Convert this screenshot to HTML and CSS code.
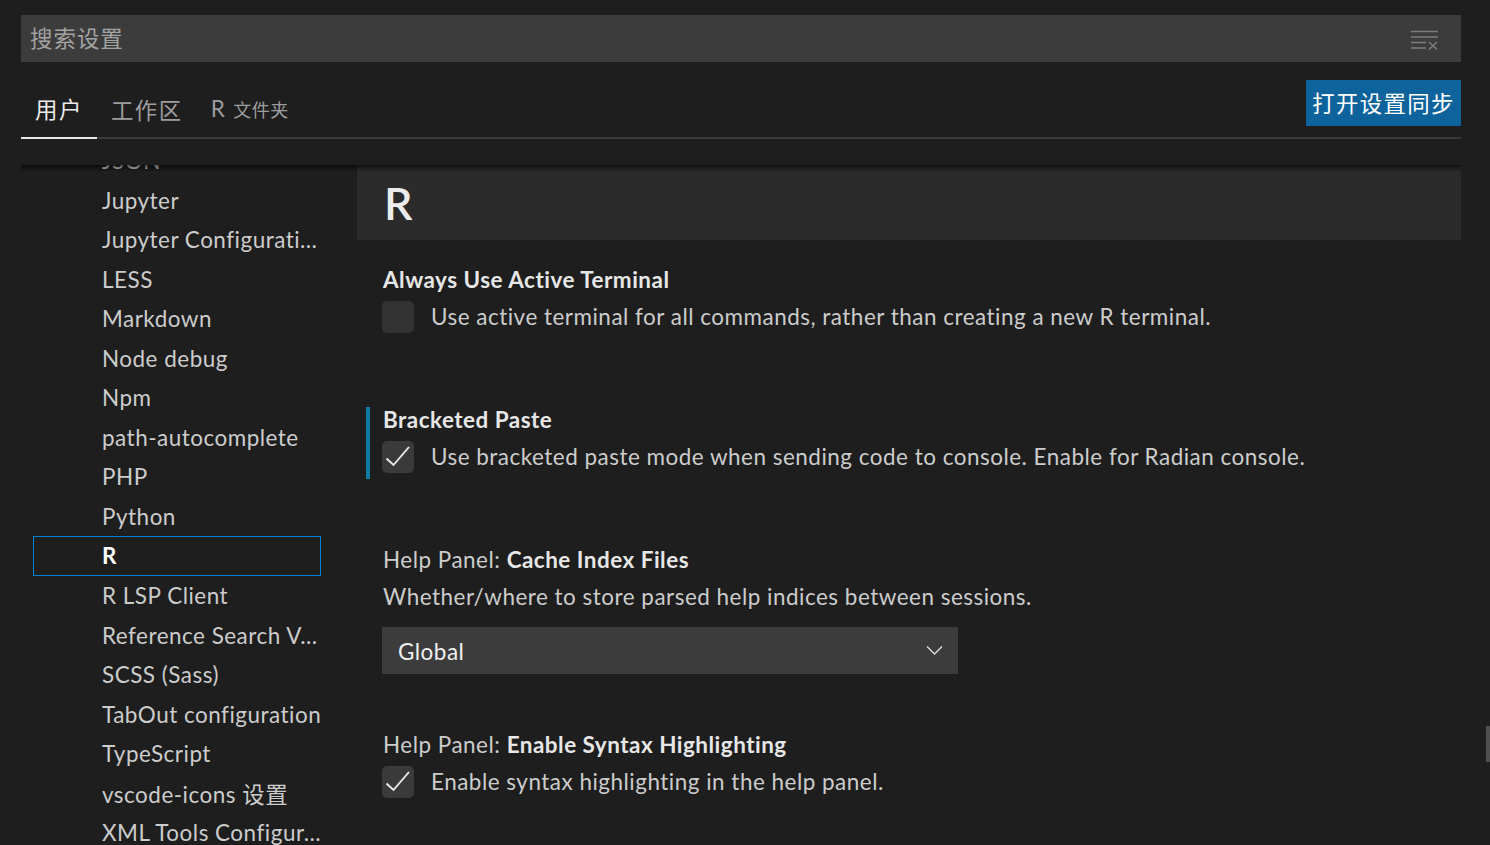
FILE: index.html
```html
<!DOCTYPE html>
<html lang="zh-CN">
<head>
<meta charset="utf-8">
<title>设置</title>
<link rel="stylesheet" href="styles.css">
</head>
<body>
<div class="editor">
  <div class="search">
    <span class="placeholder">搜索设置</span>
    <svg class="clear-icon" width="28" height="20" viewBox="0 0 28 20" aria-hidden="true">
      <g stroke="#7d7d7d" stroke-width="1.5" fill="none">
        <path d="M0 1.5H27"/>
        <path d="M0 7H27"/>
        <path d="M0 12.5H15"/>
        <path d="M0 18H15"/>
        <path d="M18 12L26 19.5M26 12L18 19.5"/>
      </g>
    </svg>
  </div>

  <div class="tabs-row">
    <div class="tabs">
      <div class="tab active">用户</div>
      <div class="tab">工作区</div>
      <div class="tab">R<span class="tab-desc">文件夹</span></div>
    </div>
    <button class="sync-btn">打开设置同步</button>
  </div>

  <div class="body">
    <nav class="toc">
      <div class="toc-list">
        <div class="toc-item">JSON</div>
        <div class="toc-item">Jupyter</div>
        <div class="toc-item">Jupyter Configurati…</div>
        <div class="toc-item">LESS</div>
        <div class="toc-item">Markdown</div>
        <div class="toc-item">Node debug</div>
        <div class="toc-item">Npm</div>
        <div class="toc-item">path-autocomplete</div>
        <div class="toc-item">PHP</div>
        <div class="toc-item">Python</div>
        <div class="toc-item selected">R</div>
        <div class="toc-item">R LSP Client</div>
        <div class="toc-item">Reference Search V…</div>
        <div class="toc-item">SCSS (Sass)</div>
        <div class="toc-item">TabOut configuration</div>
        <div class="toc-item">TypeScript</div>
        <div class="toc-item">vscode-icons 设置</div>
        <div class="toc-item">XML Tools Configur…</div>
      </div>
    </nav>

    <main class="settings">
      <div class="group-title">R</div>

      <div class="setting bool first">
        <div class="setting-title">Always Use Active Terminal</div>
        <div class="bool-row">
          <div class="checkbox"></div>
          <div class="desc">Use active terminal for all commands, rather than creating a new R terminal.</div>
        </div>
      </div>

      <div class="setting bool modified">
        <div class="setting-title">Bracketed Paste</div>
        <div class="bool-row">
          <div class="checkbox checked">
            <svg width="32" height="32" viewBox="0 0 32 32" aria-hidden="true"><path d="M4.5 17.5L11.5 24L27 6" fill="none" stroke="#ececec" stroke-width="1.9"/></svg>
          </div>
          <div class="desc">Use bracketed paste mode when sending code to console. Enable for Radian console.</div>
        </div>
      </div>

      <div class="setting enum">
        <div class="setting-title"><span class="cat">Help Panel: </span>Cache Index Files</div>
        <div class="desc">Whether/where to store parsed help indices between sessions.</div>
        <div class="dropdown">
          <span>Global</span>
          <svg width="18" height="11" viewBox="0 0 18 11" aria-hidden="true"><path d="M1 1.5L8.5 9L16 1.5" fill="none" stroke="#d8d8d8" stroke-width="1.5"/></svg>
        </div>
      </div>

      <div class="setting bool">
        <div class="setting-title"><span class="cat">Help Panel: </span>Enable Syntax Highlighting</div>
        <div class="bool-row">
          <div class="checkbox checked">
            <svg width="32" height="32" viewBox="0 0 32 32" aria-hidden="true"><path d="M4.5 17.5L11.5 24L27 6" fill="none" stroke="#ececec" stroke-width="1.9"/></svg>
          </div>
          <div class="desc">Enable syntax highlighting in the help panel.</div>
        </div>
      </div>
    </main>

    <div class="scroll-shadow"></div>
  </div>
</div>
<div class="scroll-slider"></div>
</body>
</html>
```

FILE: styles.css
```css
html, body {
  margin: 0;
  padding: 0;
}

body {
  background: #1e1e1e;
  font-family: Lato, "Noto Sans CJK SC", sans-serif;
  font-size: 22.46px;
  letter-spacing: 0.5px;
  color: #cccccc;
  width: 1490px;
  height: 845px;
  overflow: hidden;
  position: relative;
}

.editor {
  padding: 15px 29px 0 21px;
  height: 845px;
  box-sizing: border-box;
  overflow: hidden;
}

/* search */
.search {
  height: 47px;
  background: #3c3c3c;
  display: flex;
  align-items: center;
  justify-content: space-between;
  padding: 0 22px 0 9px;
  box-sizing: border-box;
}

.placeholder {
  color: #a3a3a3;
  font-family: "Noto Sans CJK SC", sans-serif;
  letter-spacing: 1px;
  margin-bottom: 4px;
}

.clear-icon {
  display: block;
  margin-top: 2px;
}

/* tabs */
.tabs-row {
  margin-top: 18px;
  height: 59px;
  box-sizing: border-box;
  border-bottom: 2px solid #3a3a3a;
  display: flex;
  justify-content: space-between;
  align-items: flex-start;
}

.tabs {
  display: flex;
  height: 57px;
}

.tab {
  height: 57px;
  box-sizing: border-box;
  padding: 0 14px 0;
  display: flex;
  align-items: center;
  color: #9d9d9d;
  letter-spacing: 1.5px;
  white-space: nowrap;
}

.tab.active {
  height: 59px;
  padding-bottom: 2px;
  border-bottom: 2px solid #e7e7e7;
  color: #ececec;
}

.tab-desc {
  font-size: 18px;
  letter-spacing: 0.5px;
  margin-left: 7px;
  margin-top: 1px;
}

.sync-btn {
  width: 155px;
  height: 46px;
  background: #0e639c;
  color: #ffffff;
  border: 0;
  padding: 0 0 2px;
  font: inherit;
  font-family: "Noto Sans CJK SC", sans-serif;
  letter-spacing: 1.3px;
}

/* body */
.body {
  margin-top: 26px;
  height: 680px;
  display: flex;
  overflow: hidden;
  position: relative;
}

.toc {
  width: 336px;
  flex: none;
}

.toc-list {
  margin-top: -24.3px;
}

.toc-item {
  height: 39.56px;
  width: 288px;
  margin-left: 12px;
  box-sizing: border-box;
  border: 1px solid transparent;
  padding-left: 68px;
  display: flex;
  align-items: center;
  white-space: nowrap;
  overflow: hidden;
  color: #cccccc;
}

.toc-item.selected {
  border-color: #007fd4;
  color: #ffffff;
  font-weight: 700;
}

.settings {
  flex: 1;
  min-width: 0;
}

.group-title {
  height: 75px;
  background: #2b2b2b;
  display: flex;
  align-items: center;
  padding-left: 27px;
  font-size: 45px;
  font-weight: 600;
  color: #ececec;
}

.setting {
  position: relative;
  padding-left: 26px;
}

.setting.first {
  margin-top: 24px;
}

.setting.bool {
  padding-bottom: 71px;
}

.setting.enum {
  padding-bottom: 55px;
}

.setting.modified::before {
  content: "";
  position: absolute;
  left: 9px;
  top: 3px;
  bottom: 65px;
  width: 4px;
  background: #0c7d9d;
}

.setting-title {
  line-height: 31px;
  color: #e7e7e7;
  font-weight: 700;
  white-space: nowrap;
}

.setting-title .cat {
  font-weight: 400;
  color: #cccccc;
}

.bool-row {
  display: flex;
  align-items: center;
  gap: 17px;
  height: 32px;
  margin-top: 6px;
  margin-left: -1px;
}

.bool-row .desc {
  margin-bottom: 2px;
}

.checkbox {
  width: 32px;
  height: 32px;
  flex: none;
  border-radius: 5px;
  background: #333333;
  display: flex;
  align-items: center;
  justify-content: center;
}

.checkbox.checked {
  background: #3a3a3a;
}

.checkbox svg {
  display: block;
}

.desc {
  line-height: 31px;
  color: #cccccc;
  white-space: nowrap;
}

.enum .desc {
  margin-top: 6px;
}

.dropdown {
  margin-top: 15px;
  margin-left: -1px;
  width: 576px;
  height: 47px;
  box-sizing: border-box;
  background: #3c3c3c;
  display: flex;
  align-items: center;
  justify-content: space-between;
  padding: 0 14px 0 16px;
  color: #f0f0f0;
}

.dropdown span {
  margin-top: 2px;
}

.dropdown svg {
  display: block;
}

.scroll-shadow {
  position: absolute;
  top: 0;
  left: 0;
  right: 0;
  height: 7px;
  background: linear-gradient(rgba(0, 0, 0, 0.6), rgba(0, 0, 0, 0));
  pointer-events: none;
}

.scroll-slider {
  position: absolute;
  left: 1486px;
  top: 726px;
  width: 4px;
  height: 36px;
  background: #4f4f4f;
}
```
